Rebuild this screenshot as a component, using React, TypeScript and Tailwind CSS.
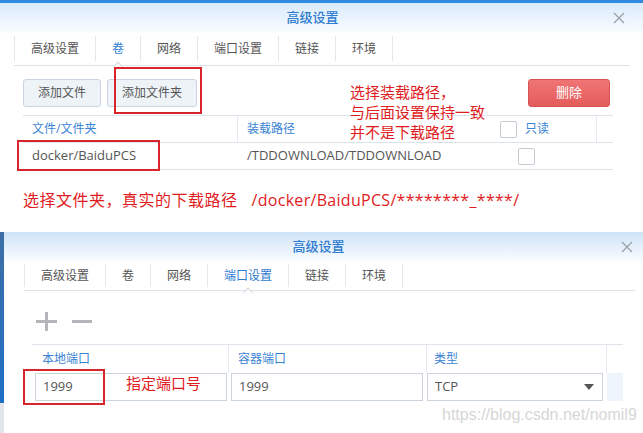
import React from 'react';

const tabs = ['高级设置', '卷', '网络', '端口设置', '链接', '环境'];

const CloseIcon = () => (
  <svg width="12" height="12" viewBox="0 0 12 12" className="block">
    <path d="M1 1 L11 11 M11 1 L1 11" stroke="#9aa3ab" strokeWidth="1.4" fill="none" />
  </svg>
);

const Header = ({ pr, bar }: { pr: string; bar?: boolean }) => (
  <div className={`grid h-[30px] grid-cols-[1fr_auto_1fr] items-center ${pr} ${bar ? 'bg-gradient-to-b from-[#d9eafb] to-[#fbfdff]' : 'bg-gradient-to-b from-[#cfe3f7] to-[#fbfdff]'}`}>
    <div />
    <div className="text-[13px] font-medium text-[#2d7bd1]">高级设置</div>
    <div className="flex justify-end">
      <CloseIcon />
    </div>
  </div>
);

const Tabs = ({ active, box }: { active: string; box: string }) => (
  <div className={`flex border-b border-[#dde2e8] ${box}`}>
    {tabs.map((t, i) => (
      <div
        key={t}
        className={`relative flex items-center border-r border-[#e3e6ea] px-4 text-[12px] ${i === 0 ? 'border-l' : ''} ${t === active ? 'text-[#2d7bd1]' : 'text-[#555]'}`}
      >
        {t}
        {t === active && (
          <span className="absolute -bottom-[8.5px] left-1/2 h-[7px] w-[7px] -translate-x-1/2 rotate-45 border-l border-t border-[#d3d9e0] bg-white" />
        )}
      </div>
    ))}
  </div>
);

const Checkbox = () => <span className="block h-[17px] w-[17px] rounded-[2px] border border-[#c5cbd2] bg-white" />;

const RedBox = ({ cls }: { cls: string }) => <div className={`absolute border-2 border-[#d8242d] ${cls}`} />;

const VolumeDialog = () => (
  <div className="relative h-[232px] shrink-0 bg-white">
    <div className="h-[3px] bg-[#2f8ae0]" />
    <Header pr="pr-[18px]" bar />
    <Tabs active="卷" box="mx-[14px] mr-[13px] pt-[3px] pb-[4px] [&>div]:h-[25px]" />

    <div className="pl-[23px] pr-[33px] pt-[13px]">
      <div className="flex items-center justify-between">
        <div className="flex gap-[6px]">
          <button className="h-[28px] w-[78px] rounded-[3px] border border-[#cbd4de] bg-[#eef3f8] text-[12px] text-[#555]">添加文件</button>
          <button className="h-[28px] w-[90px] rounded-[3px] border border-[#cbd4de] bg-[#eef3f8] text-[12px] text-[#555]">添加文件夹</button>
        </div>
        <button className="h-[28px] w-[82px] rounded-[3px] border border-[#d95252] bg-gradient-to-b from-[#f07575] to-[#e45b5b] text-[13px] text-white">删除</button>
      </div>

      <div className="mt-[8px] w-[590px] border-t border-[#dde3ea]">
        <div className="grid h-[27px] grid-cols-[215px_215px_144px_16px] border-b border-[#dde3ea] text-[12px] text-[#3a84d4]">
          <div className="flex items-center border-r border-[#e6eaef] pl-[9px]">文件/文件夹</div>
          <div className="flex items-center border-r border-[#eef1f4] pl-[9px]">装载路径</div>
          <div className="flex items-center justify-center gap-[8px] border-r border-[#e6eaef]">
            <Checkbox />
            <span>只读</span>
          </div>
          <div />
        </div>
        <div className="grid h-[27px] grid-cols-[215px_215px_144px_16px] border-b border-[#dde3ea] text-[13px] text-[#555]">
          <div className="flex items-center pl-[9px]">docker/BaiduPCS</div>
          <div className="flex items-center pl-[9px]">/TDDOWNLOAD/TDDOWNLOAD</div>
          <div className="flex items-center justify-center pl-[2px]">
            <Checkbox />
          </div>
          <div />
        </div>
      </div>

      <div className="mt-[18px] flex text-[16px] leading-[24px] text-[#e11b22]">
        <span className="tracking-[0.5px]">选择文件夹，真实的下载路径</span>
        <span className="ml-[14px] tracking-[0.3px]">/docker/BaiduPCS/********_****/</span>
      </div>
    </div>

    <RedBox cls="left-[114px] top-[67px] h-[47px] w-[88px]" />
    <RedBox cls="left-[17px] top-[140px] h-[31px] w-[143px]" />
    <div className="absolute left-[350px] top-[82px] text-[15px] leading-[20px] text-[#e11b22]">
      <div>选择装载路径，</div>
      <div>与后面设置保持一致</div>
      <div>并不是下载路径</div>
    </div>
  </div>
);

const PlusMinus = () => (
  <div className="ml-[4px] flex items-center gap-[15px]">
    <svg width="21" height="19" viewBox="0 0 21 19" className="block">
      <rect x="0" y="8" width="21" height="3" fill="#b4b6b9" />
      <rect x="9" y="0" width="3" height="19" fill="#b4b6b9" />
    </svg>
    <svg width="20" height="19" viewBox="0 0 20 19" className="block">
      <rect x="0" y="8" width="20" height="3" fill="#b4b6b9" />
    </svg>
  </div>
);

const PortDialog = () => (
  <div className="flex h-[201px] overflow-hidden">
    <div className="flex w-[4px] shrink-0 flex-col">
      <div className="flex-1 bg-gradient-to-b from-[#3d6fa6] to-[#1d6fc6]" />
      <div className="h-[30px] bg-[#e2e6ea]" />
    </div>
    <div className="relative w-[658px] shrink-0 bg-white">
      <Header pr="pr-[29px]" />
      <Tabs active="端口设置" box="ml-[20px] mr-[27px] pt-[2px] pb-[3px] [&>div]:h-[23px]" />

      <div className="pl-[28px] pt-[21px]">
        <PlusMinus />
        <div className="mt-[13px] w-[591px] border-t border-[#dde3ea]">
          <div className="grid h-[28px] grid-cols-[197px_198px_180px_16px] text-[12px] text-[#3a84d4]">
            <div className="flex items-center border-r border-[#e6eaef] pl-[10px]">本地端口</div>
            <div className="flex items-center border-r border-[#e6eaef] pl-[9px]">容器端口</div>
            <div className="flex items-center border-r border-[#e6eaef] pl-[7px]">类型</div>
            <div />
          </div>
          <div className="grid h-[28px] grid-cols-[197px_198px_180px_16px] text-[13px] text-[#555]">
            <div className="pl-[3px] pr-[2px]">
              <div className="flex h-full items-center border border-[#ccd4dd] pl-[7px]">1999</div>
            </div>
            <div className="pl-[2px] pr-[4px]">
              <div className="flex h-full items-center border border-[#ccd4dd] pl-[7px]">1999</div>
            </div>
            <div className="pr-[4px]">
              <div className="flex h-full items-center justify-between border border-[#ccd4dd] pl-[7px] pr-[8px]">
                <span>TCP</span>
                <svg width="10" height="6" viewBox="0 0 10 6" className="block">
                  <path d="M0 0 L10 0 L5 6 Z" fill="#555" />
                </svg>
              </div>
            </div>
            <div className="bg-[#eef4fb]" />
          </div>
        </div>
      </div>

      <RedBox cls="left-[19px] top-[137px] h-[36px] w-[82px]" />
      <div className="absolute left-[122px] top-[141px] text-[15px] leading-[20px] text-[#e11b22]">指定端口号</div>
      <div className="absolute left-[438px] top-[173px] font-['Liberation_Sans',sans-serif] text-[16px] leading-[20px] text-[#d6d6d6]">
        https://blog.csdn.net/nomil9
      </div>
    </div>
  </div>
);

export default function App() {
  return (
    <div className="flex h-[433px] w-[643px] flex-col overflow-hidden bg-white font-['Open_Sans','Noto_Sans_CJK_SC',sans-serif]">
      <VolumeDialog />
      <PortDialog />
    </div>
  );
}
